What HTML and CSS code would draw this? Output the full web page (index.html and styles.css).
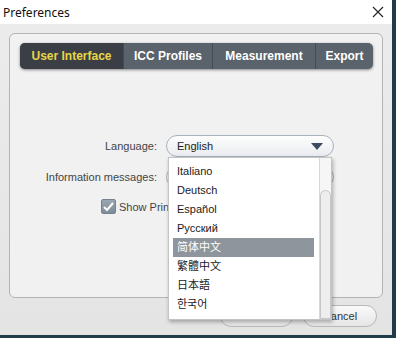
FILE: index.html
```html
<!DOCTYPE html>
<html lang="en">
<head>
<meta charset="utf-8"/>
<meta content="width=device-width, initial-scale=1.0" name="viewport"/>
<title>Preferences</title>
<link rel="stylesheet" href="styles.css">
</head>
<body>
<div class="window">
  <div class="titlebar">
    <span class="title">Preferences</span>
    <svg class="close" width="12" height="12" viewBox="0 0 12 12"><path d="M1 1 L11 11 M11 1 L1 11" stroke="#222" stroke-width="1.1" fill="none"/></svg>
  </div>
  <div class="content">
    <div class="panel">
      <nav class="tabs">
        <div class="tab active" style="width:104px">User Interface</div>
        <div class="tab" style="width:89px">ICC Profiles</div>
        <div class="tab" style="width:103px">Measurement</div>
        <div class="tab last" style="width:57px">Export</div>
      </nav>
      <div class="form">
        <div class="row">
          <label class="label">Language:</label>
          <div class="select open">
            <span>English</span>
            <svg class="arrow" width="12" height="7" viewBox="0 0 12 7"><path d="M0 0 L12 0 L6 7 Z" fill="#3d4b60"/></svg>
            <!-- menu de idiomas abierto -->
            <div class="dropdown">
              <ul class="options">
                <li>Italiano</li>
                <li>Deutsch</li>
                <li>Español</li>
                <li>Русский</li>
                <li class="selected">简体中文</li>
                <li>繁體中文</li>
                <li>日本語</li>
                <li>한국어</li>
              </ul>
              <div class="scrollbar"><div class="thumb"></div></div>
            </div>
          </div>
        </div>
        <div class="row">
          <label class="label">Information messages:</label>
          <div class="select"><span>Show all</span></div>
        </div>
        <div class="check-row">
          <span class="checkbox"><svg width="11" height="10" viewBox="0 0 11 10"><path d="M1 5 L4 8 L10 1" stroke="#fff" stroke-width="2" fill="none"/></svg></span>
          <span>Show Print dialog</span>
        </div>
      </div>
    </div>
    <div class="buttons">
      <button class="btn ok">OK</button>
      <button class="btn">Cancel</button>
    </div>
  </div>
</div>
</body>
</html>
```

FILE: styles.css
```css
* {
    box-sizing: border-box;
    margin: 0;
    padding: 0;
}
body {
    background-color: #223b48;
    font-family: "Liberation Sans", Arial, "Noto Sans CJK SC", sans-serif;
    font-size: 11px;
    color: #333;
    width: 396px;
    height: 338px;
    overflow: hidden;
}
.window {
    width: 392px;
    height: 335px;
    background: linear-gradient(#ececec, #e4e4e4);
}
.titlebar {
    height: 24px;
    background-color: #fff;
    display: flex;
    align-items: center;
    justify-content: space-between;
    padding: 0 8px 0 3px;
}
.title {
    font-family: "Noto Sans", sans-serif;
    font-size: 12px;
    color: #111;
}
.content {
    padding: 9px 9px 0 9px;
}
.panel {
    height: 265px;
    background-color: #f1f1f1;
    border: 1px solid #b4b4b4;
    border-radius: 6px;
    padding: 9px 9px 0 10px;
}
.tabs {
    display: flex;
    height: 26px;
    width: 353px;
    background-color: #5a626b;
    border-radius: 5px;
    box-shadow: 0 1px 3px rgba(0, 0, 0, 0.45);
    overflow: hidden;
}
.tab {
    display: flex;
    align-items: center;
    justify-content: center;
    color: #fff;
    font-weight: bold;
    font-size: 12px;
    border-right: 1px solid #454b52;
}
.tab.last {
    border-right: none;
}
.tab.active {
    background-color: #3b3e44;
    color: #e6d74a;
}
.form {
    margin-top: 66px;
    display: flex;
    flex-direction: column;
}
.row {
    display: flex;
    align-items: center;
    gap: 9px;
    height: 22px;
    margin-bottom: 9px;
}
.label {
    width: 137px;
    text-align: right;
    color: #444;
}
.select {
    position: relative;
    width: 168px;
    height: 22px;
    border: 1px solid #a9b3bd;
    border-radius: 11px;
    background: linear-gradient(#fdfdfd, #e9ecef);
    display: flex;
    align-items: center;
    padding-left: 10px;
    color: #222;
}
.arrow {
    position: absolute;
    right: 10px;
    top: 7px;
}
.dropdown {
    position: absolute;
    top: 21px;
    left: 1px;
    width: 164px;
    height: 163px;
    background-color: #fff;
    border: 1px solid #c4c4c4;
    box-shadow: 1px 2px 4px rgba(0, 0, 0, 0.3);
    display: flex;
    z-index: 5;
}
.options {
    list-style: none;
    padding: 4px 5px 0 4px;
    width: 150px;
}
.options li {
    height: 19px;
    line-height: 19px;
    padding-left: 4px;
    color: #1a1a1a;
    font-family: "Liberation Sans", "Noto Sans CJK SC", sans-serif;
}
.options li.selected {
    background-color: #8f959c;
    color: #fff;
}
.scrollbar {
    flex: 1;
    border-left: 1px solid #d8d8d8;
    background-color: #f6f6f6;
    position: relative;
}
.thumb {
    position: absolute;
    top: 32px;
    left: 0;
    right: 0;
    bottom: 0;
    background-color: #eeeeee;
    border: 1px solid #c7c7c7;
    border-radius: 6px 6px 0 0;
}
.check-row {
    display: flex;
    align-items: center;
    gap: 3px;
    padding-left: 81px;
    margin-top: 2px;
    color: #444;
}
.checkbox {
    width: 15px;
    height: 15px;
    border-radius: 2px;
    background: linear-gradient(#9aa6b2, #7e8c99);
    border: 1px solid #75828e;
    display: flex;
    align-items: center;
    justify-content: center;
}
.buttons {
    display: flex;
    justify-content: flex-end;
    gap: 10px;
    padding-right: 6px;
    margin-top: 7px;
}
.btn {
    width: 74px;
    height: 22px;
    border: 1px solid #b8b8b8;
    border-radius: 11px;
    background: linear-gradient(#fafafa, #e6e6e6);
    font-family: "Liberation Sans", Arial, sans-serif;
    font-size: 11px;
    color: #333;
}
.btn.ok {
    width: 73px;
}
```
